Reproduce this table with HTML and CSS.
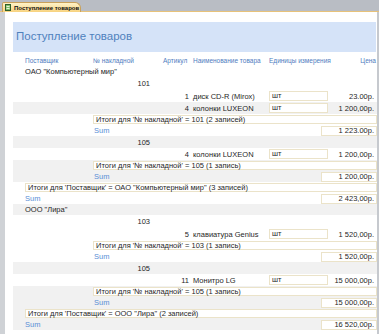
FILE: index.html
```html
<!DOCTYPE html>
<html lang="ru">
<head>
<meta charset="utf-8">
<link rel="stylesheet" href="styles.css">
</head>
<body>
<div class="window">
  <div class="tabbar">
    <div class="tab">
      <svg class="tab-icon" width="6" height="7" viewBox="0 0 6 7"><rect x="0.5" y="0.5" width="5" height="6" fill="#7fbf6a" stroke="#2e5e2a"/><line x1="1.5" y1="2.5" x2="4.5" y2="2.5" stroke="#e8f5d8"/><line x1="1.5" y1="4.5" x2="4.5" y2="4.5" stroke="#e8f5d8"/></svg>
      <span class="tab-text">Поступление товаров</span>
    </div>
  </div>
  <div class="body">
    <div class="strip"></div>
    <div class="report">
      <div class="title-band"><h1 class="title">Поступление товаров</h1></div>

      <div class="row hdr">
        <span class="h-sup">Поставщик</span>
        <span class="h-num">№ накладной</span>
        <span class="h-art">Артикул</span>
        <span class="h-name">Наименование товара</span>
        <span class="h-unit">Единицы измерения</span>
        <span class="h-price">Цена</span>
      </div>

      <div class="row sup"><span>ОАО "Компьютерный мир"</span></div>
      <div class="row inv tall"><span class="num">101</span></div>
      <div class="row det">
        <span class="art">1</span><span class="name">диск CD-R (Mirox)</span><span class="unit">шт</span><span class="price">23.00р.</span>
      </div>
      <div class="row det alt">
        <span class="art">4</span><span class="name">колонки LUXEON</span><span class="unit">шт</span><span class="price">1 200,00р.</span>
      </div>
      <div class="row tot inv-tot"><span class="tot-box">Итоги для '№ накладной' = 101 (2 записей)</span></div>
      <div class="row sum inv-sum"><span class="sum-label">Sum</span><span class="sum-box">1 223.00р.</span></div>

      <div class="row inv alt"><span class="num">105</span></div>
      <div class="row det">
        <span class="art">4</span><span class="name">колонки LUXEON</span><span class="unit">шт</span><span class="price">1 200,00р.</span>
      </div>
      <div class="alt">
        <div class="row tot inv-tot"><span class="tot-box">Итоги для '№ накладной' = 105 (1 запись)</span></div>
        <div class="row sum inv-sum"><span class="sum-label">Sum</span><span class="sum-box">1 200,00р.</span></div>
      </div>

      <div class="row tot sup-tot"><span class="tot-box">Итоги для 'Поставщик' = ОАО "Компьютерный мир" (3 записей)</span></div>
      <div class="row sum sup-sum"><span class="sum-label">Sum</span><span class="sum-box">2 423,00р.</span></div>

      <div class="row sup alt"><span>ООО "Лира"</span></div>
      <div class="row inv tall"><span class="num">103</span></div>
      <div class="row det">
        <span class="art">5</span><span class="name">клавиатура Genius</span><span class="unit">шт</span><span class="price">1 520,00р.</span>
      </div>
      <div class="row tot inv-tot"><span class="tot-box">Итоги для '№ накладной' = 103 (1 запись)</span></div>
      <div class="row sum inv-sum"><span class="sum-label">Sum</span><span class="sum-box">1 520,00р.</span></div>

      <div class="row inv alt"><span class="num">105</span></div>
      <div class="row det">
        <span class="art">11</span><span class="name">Монитро LG</span><span class="unit">шт</span><span class="price">15 000,00р.</span>
      </div>
      <div class="alt">
        <div class="row tot inv-tot"><span class="tot-box">Итоги для '№ накладной' = 105 (1 запись)</span></div>
        <div class="row sum inv-sum"><span class="sum-label">Sum</span><span class="sum-box">15 000,00р.</span></div>
      </div>

      <div class="alt">
        <div class="row tot sup-tot"><span class="tot-box">Итоги для 'Поставщик' = ООО "Лира" (2 записей)</span></div>
        <div class="row sum sup-sum"><span class="sum-label">Sum</span><span class="sum-box">16 520,00р.</span></div>
      </div>
    </div>
  </div>
</div>
</body>
</html>
```

FILE: styles.css
```css
* { box-sizing: border-box; }
html, body { margin: 0; padding: 0; }
body {
  width: 379px;
  height: 334px;
  overflow: hidden;
  background: #ffffff;
  font-family: "Liberation Sans", Arial, sans-serif;
  font-size: 7.5px;
  color: #1f1f1f;
}
.window {
  width: 379px;
  height: 334px;
  display: flex;
  flex-direction: column;
}
.tabbar {
  height: 12px;
  flex: none;
  background: #b9bdc4;
  border-bottom: 1px solid #e7c27a;
  padding: 2px 0 0 2px;
  display: flex;
}
.tab {
  width: 79px;
  height: 10px;
  background: linear-gradient(#fff3c8, #f7d27e);
  border: 1px solid #c9a15a;
  border-bottom: none;
  border-radius: 2px 6px 0 0;
  display: flex;
  align-items: center;
  padding-left: 2px;
  gap: 3px;
}
.tab-icon { flex: none; }
.tab-text {
  font-size: 6px;
  font-weight: bold;
  color: #111;
  white-space: nowrap;
}
.body {
  flex: 1;
  display: flex;
  border-right: 2px solid #c6c9ce;
}
.strip {
  width: 5px;
  flex: none;
  background: #cfd2d6;
}
.report {
  flex: 1;
  padding: 10px 0 0 8px;
}
.title-band {
  height: 30px;
  width: 363px;
  background: #d5e3f8;
  display: flex;
  align-items: center;
  padding-left: 3px;
  margin-bottom: 2px;
}
.title {
  margin: 0;
  font-family: "Liberation Sans", Arial, sans-serif;
  font-weight: normal;
  font-size: 11.5px;
  color: #4f81bd;
  position: relative;
  top: -1px;
}
.row {
  height: 11px;
  display: flex;
  align-items: center;
  white-space: nowrap;
  width: 364px;
}
.alt, .row.alt { background: #f1f1f1; }
.alt .row { background: transparent; }

.hdr { height: 12px; color: #4f7cc0; font-size: 6.5px; }
.h-sup { margin-left: 12px; width: 68px; }
.h-num { width: 70px; }
.h-art { width: 30px; }
.h-name { width: 76px; }
.h-unit { flex: 1; }
.h-price { padding-right: 1px; }

.sup span { margin-left: 12px; }
.inv { height: 12px; }
.inv.tall { height: 13px; }
.num { margin-left: 80px; width: 57px; text-align: right; }

.det { height: 12px; }
.art { margin-left: 150px; width: 26px; text-align: right; }
.name { margin-left: 4px; width: 76px; }
.unit {
  width: 59px;
  height: 10px;
  border: 1px solid #ebe3c9;
  background: #fff;
  padding-left: 2px;
  line-height: 8px;
}
.price { flex: 1; text-align: right; padding-right: 3px; }

.tot-box {
  flex: 1;
  height: 9px;
  border: 1px solid #ebe3c9;
  background: #fff;
  padding-left: 2px;
  line-height: 7px;
}
.inv-tot .tot-box { margin-left: 80px; }
.sup-tot .tot-box { margin-left: 12px; }

.sum-label { color: #5b8fd6; flex: 1; }
.inv-sum .sum-label { margin-left: 81px; }
.sup-sum .sum-label { margin-left: 12px; }
.sum-box {
  width: 56px;
  height: 10px;
  border: 1px solid #ebe3c9;
  background: #fff;
  text-align: right;
  padding-right: 2px;
  line-height: 8px;
}
```
